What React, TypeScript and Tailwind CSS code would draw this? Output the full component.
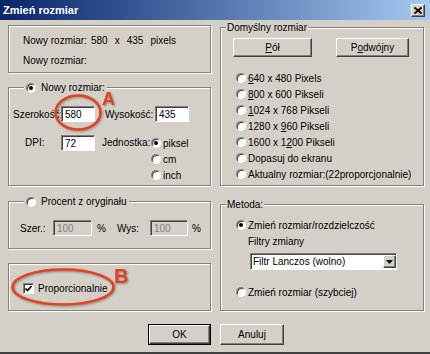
import React from "react";

const raised =
  "border border-t-white border-l-white border-b-[#404040] border-r-[#404040] bg-[#d4d0c8] shadow-[inset_-1px_-1px_0_#808080]";
const sunken =
  "border border-t-[#808080] border-l-[#808080] border-b-white border-r-white shadow-[inset_1px_1px_0_#404040]";
const etched = "border border-[#808080] shadow-[inset_1px_1px_0_#fff,1px_1px_0_#fff]";

function Radio({ checked }: { checked?: boolean }) {
  return (
    <span
      className={`flex h-[10px] w-[10px] shrink-0 items-center justify-center rounded-full bg-white ${sunken}`}
    >
      {checked && <span className="h-[4px] w-[4px] rounded-full bg-black" />}
    </span>
  );
}

function Option({ checked, children }: { checked?: boolean; children: React.ReactNode }) {
  return (
    <div className="flex h-[16px] items-center gap-[2px]">
      <Radio checked={checked} />
      <span>{children}</span>
    </div>
  );
}

function Edit({ value, width, disabled }: { value: string; width: string; disabled?: boolean }) {
  return (
    <div
      className={`flex h-[16px] items-center pl-[3px] ${sunken} ${width} ${
        disabled ? "bg-[#d4d0c8] text-[#808080]" : "bg-white"
      }`}
    >
      {value}
    </div>
  );
}

function Button({ children, width, isDefault }: { children: React.ReactNode; width: string; isDefault?: boolean }) {
  if (isDefault) {
    return (
      <div className={`h-[21px] border border-black ${width}`}>
        <div className={`flex h-full items-center justify-center ${raised}`}>{children}</div>
      </div>
    );
  }
  return <div className={`flex items-center justify-center ${raised} ${width}`}>{children}</div>;
}

const u = (s: string) => <span className="underline underline-offset-1">{s}</span>;

export default function App() {
  return (
    <div className="relative h-[354px] w-[430px] overflow-hidden border-b-2 border-[#404040] bg-[#d4d0c8] font-['Liberation_Sans_Narrow','Liberation_Sans',sans-serif] text-[10px] leading-[13px] text-black">
      {/* title bar */}
      <div className="flex h-[20px] items-center justify-between bg-linear-to-r from-[#0a246a] to-[#a6caf0] pl-[3px] pr-[5px]">
        <span className="font-['Liberation_Sans',sans-serif] text-[11px] font-bold text-white">Zmień rozmiar</span>
        <div className={`flex h-[13px] w-[14px] items-center justify-center ${raised}`}>
          <svg width="8" height="7" viewBox="0 0 8 7">
            <path d="M0.5 0.5 L7.5 6.5 M7.5 0.5 L0.5 6.5" stroke="#000" strokeWidth="1.8" />
          </svg>
        </div>
      </div>

      <div className="flex flex-col pl-[8px] pr-[6px] pt-[1px]">
        <div className="flex gap-[9px]">
          {/* left column */}
          <div className="flex w-[203px] flex-col">
            <div className={`mt-[4px] flex h-[48px] flex-col gap-[7px] pl-[14px] pt-[8px] ${etched}`}>
              <div className="flex">
                <span className="w-[68px]">Nowy rozmiar:</span>
                <span className="flex gap-[7px]">
                  <span>580</span>
                  <span>x</span>
                  <span>435</span>
                  <span>pixels</span>
                </span>
              </div>
              <div>Nowy rozmiar:</div>
            </div>

            <fieldset className={`mt-[8px] h-[105px] ${etched}`}>
              <legend className="ml-[15px] flex items-center gap-[5px] bg-[#d4d0c8] px-[2px]">
                <Radio checked />
                <span>Nowy rozmiar:</span>
              </legend>
              <div className="mt-[12px] flex items-center pl-[4px]">
                <span className="w-[48px]">Szerokość:</span>
                <Edit value="580" width="w-[34px]" />
                <span className="ml-[10px] w-[50px]">Wysokość:</span>
                <Edit value="435" width="w-[34px]" />
              </div>
              <div className="mt-[13px] flex items-start pl-[16px]">
                <span className="w-[36px] leading-[16px]">DPI:</span>
                <Edit value="72" width="w-[34px]" />
                <span className="ml-[7px] w-[49px] leading-[16px]">Jednostka:</span>
                <div className="flex flex-col">
                  <Option checked>piksel</Option>
                  <Option>cm</Option>
                  <Option>inch</Option>
                </div>
              </div>
            </fieldset>

            <fieldset className={`mt-[9px] h-[54px] ${etched}`}>
              <legend className="ml-[15px] flex items-center gap-[5px] bg-[#d4d0c8] px-[2px]">
                <Radio />
                <span>Procent z oryginału</span>
              </legend>
              <div className="mt-[12px] flex items-center pl-[11px]">
                <span className="w-[33px]">Szer.:</span>
                <Edit value="100" width="w-[39px]" disabled />
                <span className="ml-[5px] w-[20px]">%</span>
                <span className="w-[33px]">Wys:</span>
                <Edit value="100" width="w-[38px]" disabled />
                <span className="ml-[4px]">%</span>
              </div>
            </fieldset>

            <div className={`mt-[14px] h-[48px] pl-[14px] pt-[18px] ${etched}`}>
              <div className="flex items-center gap-[4px]">
                <span className={`flex h-[11px] w-[11px] items-center justify-center bg-white ${sunken}`}>
                  <svg width="7" height="7" viewBox="0 0 7 7">
                    <path d="M0.5 3.5 L2.5 5.5 L6.5 1" stroke="#000" strokeWidth="1.6" fill="none" />
                  </svg>
                </span>
                <span>Proporcionalnie</span>
              </div>
            </div>
          </div>

          {/* right column */}
          <div className="flex w-[204px] flex-col">
            <fieldset className={`h-[165px] ${etched}`}>
              <legend className="ml-[5px] bg-[#d4d0c8] px-[1px]">Domyślny rozmiar</legend>
              <div className="mt-[4px] flex h-[19px] pl-[12px]">
                <Button width="w-[79px]">{u("P")}ół</Button>
                <Button width="ml-[24px] w-[73px]">
                  P{u("o")}dwójny
                </Button>
              </div>
              <div className="mt-[13px] flex flex-col pl-[15px]">
                <Option>{u("6")}40 x 480 Pixels</Option>
                <Option>{u("8")}00 x 600 Pikseli</Option>
                <Option>{u("1")}024 x 768 Pikseli</Option>
                <Option>1280 x {u("9")}60 Pikseli</Option>
                <Option>1600 x 1{u("2")}00 Pikseli</Option>
                <Option>Dopasuj do ekranu</Option>
                <Option>Aktualny rozmiar:(22proporcjonalnie)</Option>
              </div>
            </fieldset>

            <fieldset className={`mt-[12px] h-[113px] ${etched}`}>
              <legend className="ml-[5px] bg-[#d4d0c8] px-[1px]">Metoda:</legend>
              <div className="mt-[6px] flex flex-col pl-[15px]">
                <Option checked>Zmień rozmiar/rozdzielczość</Option>
                <div className="flex h-[16px] items-center pl-[12px]">Filtry zmiany</div>
                <div className={`ml-[14px] mt-[4px] flex h-[17px] w-[147px] items-center justify-between bg-white pl-[2px] ${sunken}`}>
                  <span>Filtr Lanczos (wolno)</span>
                  <div className={`flex h-[13px] w-[13px] items-center justify-center ${raised}`}>
                    <svg width="7" height="4" viewBox="0 0 7 4">
                      <path d="M0 0 H7 L3.5 4 Z" fill="#000" />
                    </svg>
                  </div>
                </div>
                <div className="mt-[14px]">
                  <Option>Zmień rozmiar (szybciej)</Option>
                </div>
              </div>
            </fieldset>
          </div>
        </div>

        <div className="mt-[13px] flex justify-center gap-[9px]">
          <Button width="w-[63px]" isDefault>
            OK
          </Button>
          <Button width="h-[21px] w-[64px]">Anuluj</Button>
        </div>
      </div>

      {/* red annotations */}
      <svg
        className="pointer-events-none absolute left-0 top-0 drop-shadow-[1px_1px_1px_rgba(0,0,0,0.35)]"
        width="430"
        height="354"
      >
        <ellipse cx="78" cy="112.5" rx="22.5" ry="17" fill="none" stroke="#e4411e" strokeWidth="2.5" />
        <ellipse cx="63" cy="287" rx="50.5" ry="17.5" fill="none" stroke="#e4411e" strokeWidth="2.5" />
        <text x="102" y="105" fill="#e4411e" fontFamily="Liberation Sans, sans-serif" fontWeight="bold" fontSize="18">
          A
        </text>
        <text x="114" y="283" fill="#e4411e" fontFamily="Liberation Sans, sans-serif" fontWeight="bold" fontSize="20">
          B
        </text>
      </svg>
    </div>
  );
}
